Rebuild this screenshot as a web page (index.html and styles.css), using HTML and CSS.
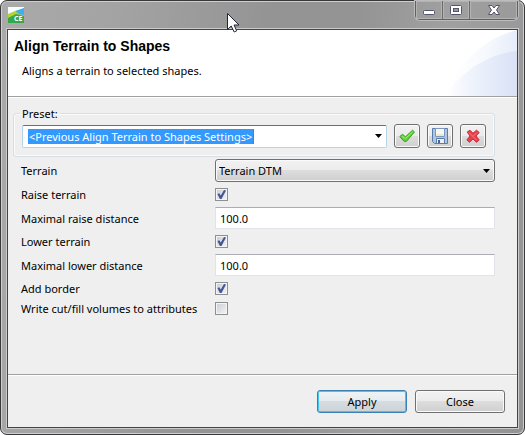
FILE: index.html
```html
<!DOCTYPE html>
<html lang="en">
<head>
<meta charset="utf-8">
<title>Align Terrain to Shapes</title>
<link rel="stylesheet" href="styles.css">
</head>
<body>
<div class="window">
  <div class="titlebar">
    <svg class="app-icon" viewBox="0 0 16 16" width="16" height="16" aria-hidden="true">
      <rect width="16" height="16" fill="#fff"/>
      <path d="M0 9 16 1v9H0z" fill="#7cc4f0"/>
      <path d="M0 0h16v1L0 7z" fill="#f6fbfd"/>
      <path d="M0 7 7 4l9 6v6H0z" fill="#b5d334"/>
      <path d="M7 4 16 1v7l-5-1z" fill="#45aee8"/>
      <path d="M0 11 8 7l8 2v7H0z" fill="#35a94a"/>
      <text class="app-icon-text" x="6" y="14">CE</text>
    </svg>
    <div class="window-controls">
      <button type="button" class="control" aria-label="Minimize">
        <svg viewBox="0 0 12 12" width="12" height="12"><rect x=".5" y="6.500" width="11" height="4" rx="1" fill="#fff" stroke="#53566b"/></svg>
      </button>
      <button type="button" class="control" aria-label="Maximize">
        <svg viewBox="0 0 12 12" width="12" height="12"><rect x=".5" y="1.500" width="11" height="9" rx="1" fill="#fff" stroke="#53566b"/><rect x="3.500" y="4.500" width="5" height="3" fill="#999" stroke="#53566b"/></svg>
      </button>
      <button type="button" class="control control-close" aria-label="Close window">
        <svg viewBox="0 0 12 12" width="12" height="12"><path d="M.5 1.500h3.500l2 2.500 2-2.500h3.500L8.500 6l3 4.500H8L6 8l-2 2.500H.5L3.500 6z" fill="#fff" stroke="#53566b"/></svg>
      </button>
    </div>
  </div>
  <form class="client">
    <header class="banner">
      <svg class="banner-art" viewBox="0 0 74 66" aria-hidden="true">
        <defs>
          <linearGradient id="fade"><stop offset="0" stop-color="#e6edfa" stop-opacity="0"/><stop offset=".5" stop-color="#e6edfa" stop-opacity=".8"/><stop offset="1" stop-color="#dae1f5"/></linearGradient>
          <linearGradient id="glow"><stop offset=".1" stop-color="#edf2fb" stop-opacity="0"/><stop offset="1" stop-color="#e3eaf9"/></linearGradient>
        </defs>
        <path d="M0 66C16 34 40 8 74 0v66z" fill="url(#glow)" opacity=".7"/>
        <path d="M36 36C44 20 56 6 74 0v66H36z" fill="url(#glow)" opacity=".6"/>
        <path d="M2 66C18 42 44 24 74 21v45z" fill="url(#fade)"/>
      </svg>
      <h1>Align Terrain to Shapes</h1>
      <p>Aligns a terrain to selected shapes.</p>
    </header>
    <main class="content">
      <fieldset class="preset">
        <legend><label for="preset">Preset:</label></legend>
        <div class="preset-row">
          <div class="combo">
            <input id="preset" class="combo-text" type="text" value="&lt;Previous Align Terrain to Shapes Settings&gt;">
            <button type="button" class="combo-arrow" aria-label="Show presets"><svg viewBox="0 0 7 4" width="7" height="4"><path d="M0 0h7L3.500 4z"/></svg></button>
          </div>
          <button type="button" class="button tool" aria-label="Apply preset">
            <svg viewBox="0 0 16 16" width="16" height="16"><path d="M.8 8.500 3.500 6.300 6.500 8.800 13.500 2.200 15.500 4 7.500 13.300H5z" fill="#5fd334" stroke="#3d9a2c" stroke-linejoin="round"/><path d="M3 8 6.300 10.500 13.500 4" fill="none" stroke="#a4ec80"/></svg>
          </button>
          <button type="button" class="button tool" aria-label="Save preset">
            <svg viewBox="0 0 16 16" width="16" height="16"><path d="M.5.5h15v15h-13l-2-2z" fill="#aec4e2" stroke="#5a7cab"/><path d="M3.500.5h9v8h-9z" fill="#f7f7ef" stroke="#7d99bf"/><path d="M4.500 10.500h8v5h-8z" fill="#eceff3" stroke="#5a7cab"/><path d="M6 12h2v3H6z" fill="#46648f"/><path d="M4 7h8" stroke="#ddd8b0"/></svg>
          </button>
          <button type="button" class="button tool" aria-label="Delete preset">
            <svg viewBox="0 0 16 16" width="16" height="16"><path d="M2.200 4 5 2.200l3 3 3.500-3L14.200 4.500 11 8l3.200 4-2.700 2.300L8 11l-3.500 3.300L1.800 12 5 8z" fill="#e8404a" stroke="#cc3039" stroke-linejoin="round"/><path d="m4 4.500 7.500 7.500M12 4.500 8.500 8" stroke="#f27f80"/></svg>
          </button>
        </div>
      </fieldset>
      <div class="settings">
        <label for="terrain">Terrain</label>
        <div class="select-wrap">
          <select id="terrain" class="button"><option>Terrain DTM</option></select>
          <svg class="select-arrow" viewBox="0 0 7 4" width="7" height="4" aria-hidden="true"><path d="M0 0h7L3.500 4z"/></svg>
        </div>
        <label for="raise">Raise terrain</label>
        <input id="raise" type="checkbox" checked>
        <label for="max-raise">Maximal raise distance</label>
        <input id="max-raise" class="field" type="text" value="100.0">
        <label for="lower">Lower terrain</label>
        <input id="lower" type="checkbox" checked>
        <label for="max-lower">Maximal lower distance</label>
        <input id="max-lower" class="field" type="text" value="100.0">
        <label for="border">Add border</label>
        <input id="border" type="checkbox" checked>
        <label for="volumes">Write cut/fill volumes to attributes</label>
        <input id="volumes" type="checkbox">
      </div>
    </main>
    <footer class="actions">
      <button type="button" class="button action primary">Apply</button>
      <button type="button" class="button action">Close</button>
    </footer>
  </form>
</div>
<svg class="pointer" viewBox="0 0 13 20" width="13" height="20" aria-hidden="true"><path d="M.5.5v16l3.700-3.500 3 6 2.500-1.200-2.700-5.800h5z" fill="#fff" stroke="#22223a"/></svg>
</body>
</html>
```
FILE: styles.css
```css
* {
  box-sizing: border-box;
}

body {
  margin: 0;
  background: #fff;
  color: #000;
  font: 11px/15px "Noto Sans", sans-serif;
}

button,
input,
select {
  margin: 0;
  color: inherit;
  font: inherit;
}

.window {
  display: flex;
  flex-direction: column;
  min-height: 100vh;
  padding: 0 6px 6px;
  border: 1px solid #38383a;
  border-radius: 7px;
  background: linear-gradient(100deg, #aaa 0, #a3a3a3 20%, #949494 45%, #949494 60%, #a0a0a0 75%, #939393 100%);
  box-shadow: inset 0 0 0 1px #cfcfcf;
}

.titlebar {
  display: flex;
  align-items: flex-start;
  justify-content: space-between;
  height: 28px;
  padding-left: 1px;
}

.app-icon {
  margin-top: 6px;
}

.app-icon-text {
  fill: #fff;
  font: bold 7px "Open Sans", sans-serif;
}

.window-controls {
  display: flex;
  border: 1px solid #5f5f66;
  border-top: 0;
  border-radius: 0 0 5px 5px;
  box-shadow: 0 0 0 1px #bcbcbc;
}

.control {
  display: flex;
  align-items: center;
  justify-content: center;
  width: 27px;
  height: 18px;
  padding: 0;
  border: 0;
  border-right: 1px solid #6b6b70;
  background: transparent;
  box-shadow: inset 0 0 0 1px #b3b3b3;
}

.control-close {
  width: 47px;
  border-right: 0;
}

.client {
  display: flex;
  flex: 1;
  flex-direction: column;
  border: 1px solid #444;
  outline: 1px solid #cbcbcb;
  background: #efefef;
}

.banner {
  position: relative;
  height: 67px;
  padding: 8px 6px;
  border-bottom: 1px solid #a0a0a0;
  background: #fff;
}

.banner-art {
  position: absolute;
  top: 0;
  right: 0;
  height: 100%;
}

.banner h1 {
  margin: 0;
  font: bold 14px/17px "Liberation Sans", sans-serif;
}

.banner p {
  margin: 8px 8px 0;
}

.content {
  flex: 1;
  padding: 8px 22px 8px 5px;
  border-top: 1px solid #fff;
}

.preset {
  min-width: 0;
  margin: 0;
  padding: 3px 8px 8px;
  border: 1px solid #d5dfe5;
  border-radius: 3px;
  box-shadow: inset 0 0 0 1px #fafafa;
}

.preset legend {
  padding: 0 2px;
  margin-left: -2px;
}

.preset-row {
  display: flex;
  align-items: center;
  gap: 7px;
}

.combo {
  display: flex;
  flex: 1;
  align-items: center;
  justify-content: space-between;
  height: 23px;
  padding-left: 5px;
  border: 1px solid #b5d5e7;
  border-top-color: #3d7bad;
  border-radius: 2px;
  background: #fff;
}

.combo-text {
  field-sizing: content;
  height: 15px;
  padding: 0 1px;
  border: 0;
  border-right: 1px solid #cc6600;
  outline: 0;
  background: #39f;
  color: #fff;
}

.combo-arrow {
  display: flex;
  align-items: center;
  justify-content: center;
  width: 15px;
  height: 21px;
  padding: 0;
  border: 0;
  background: transparent;
}

.button {
  border: 1px solid #707070;
  border-radius: 3px;
  background: linear-gradient(#f2f2f2, #ebebeb 50%, #ddd 50%, #cfcfcf);
  box-shadow: inset 0 0 0 1px #fafafa;
}

.tool {
  display: flex;
  align-items: center;
  justify-content: center;
  width: 26px;
  height: 24px;
  padding: 0;
}

.settings {
  display: grid;
  grid-template-columns: 194px 1fr;
  align-items: center;
  gap: 5px 0;
  margin-top: 2px;
  padding-left: 8px;
}

.select-wrap {
  display: flex;
  position: relative;
}

.select-wrap select {
  flex: 1;
  height: 23px;
  padding: 0 16px 0 3px;
  appearance: none;
}

.select-arrow {
  position: absolute;
  top: 10px;
  right: 5px;
  pointer-events: none;
}

.field {
  width: 100%;
  height: 22px;
  padding: 0 4px;
  border: 1px solid #e2e3ea;
  border-top-color: #abadb3;
  background: #fff;
}

input[type="checkbox"] {
  display: grid;
  place-items: center;
  width: 13px;
  height: 13px;
  border: 1px solid #8e8f8f;
  outline: 1px solid #f4f4f4;
  outline-offset: -2px;
  background: linear-gradient(135deg, #c9cdd2, #f4f4f4);
  appearance: none;
}

input[type="checkbox"]:checked::before {
  width: 9px;
  height: 9px;
  background: #42569a;
  clip-path: polygon(5% 45%, 25% 35%, 42% 62%, 78% 0, 100% 5%, 50% 100%, 32% 100%);
  content: "";
}

.settings label {
  white-space: nowrap;
}

.actions {
  display: flex;
  justify-content: flex-end;
  gap: 8px;
  padding: 15px 12px 14px;
  border-top: 1px solid #a0a0a0;
  box-shadow: inset 0 1px #fff;
}

.action {
  width: 90px;
  height: 23px;
  padding: 0;
}

.primary {
  border-color: #3c7fb1;
  background: linear-gradient(#eff3f5, #e5ebee 50%, #d5dde0 50%, #cbd3d7);
  box-shadow: inset 0 0 0 1px #45c7f2;
}

.pointer {
  position: absolute;
  top: 13px;
  left: 227px;
}
```
